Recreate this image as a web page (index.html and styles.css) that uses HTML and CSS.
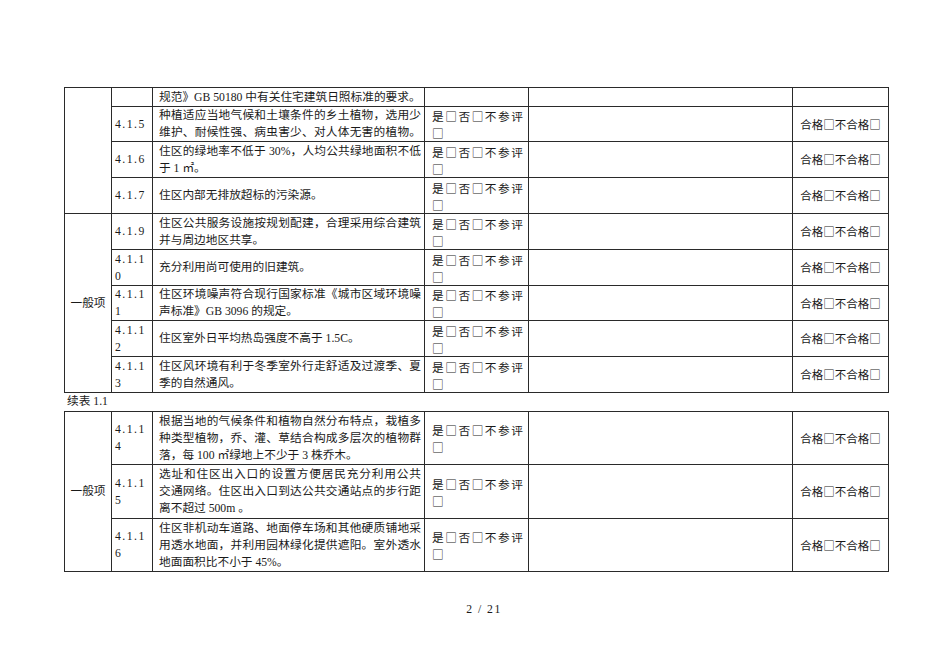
FILE: index.html
```html
<!DOCTYPE html>
<html lang="zh-CN">
<head>
<meta charset="utf-8">
<title>续表 1.1</title>
<link rel="stylesheet" href="styles.css">
</head>
<body>
<div class="page">
<table class="tbl">
<colgroup><col class="c1"><col class="c2"><col class="c3"><col class="c4"><col class="c5"><col class="c6"></colgroup>
<tr class="h19"><td class="cat" rowspan="4"></td><td class="num"></td><td class="txt"><span class="ln">规范》GB 50180 中有关住宅建筑日照标准的要求。</span></td><td class="opt"></td><td></td><td class="res"></td></tr>
<tr class="h35"><td class="num">4.1.5</td><td class="txt"><span class="ln j">种植适应当地气候和土壤条件的乡土植物，选用少</span><span class="ln j">维护、耐候性强、病虫害少、对人体无害的植物。</span></td><td class="opt"><span class="ln j">是□否□不参评</span><span class="ln">□</span></td><td></td><td class="res">合格□不合格□</td></tr>
<tr class="h36"><td class="num">4.1.6</td><td class="txt"><span class="ln j">住区的绿地率不低于 30%，人均公共绿地面积不低</span><span class="ln">于 1 ㎡。</span></td><td class="opt"><span class="ln j">是□否□不参评</span><span class="ln">□</span></td><td></td><td class="res">合格□不合格□</td></tr>
<tr class="h36"><td class="num">4.1.7</td><td class="txt"><span class="ln">住区内部无排放超标的污染源。</span></td><td class="opt"><span class="ln j">是□否□不参评</span><span class="ln">□</span></td><td></td><td class="res">合格□不合格□</td></tr>
<tr class="h36"><td class="cat" rowspan="5">一般项</td><td class="num">4.1.9</td><td class="txt"><span class="ln j">住区公共服务设施按规划配建，合理采用综合建筑</span><span class="ln">并与周边地区共享。</span></td><td class="opt"><span class="ln j">是□否□不参评</span><span class="ln">□</span></td><td></td><td class="res">合格□不合格□</td></tr>
<tr class="h36"><td class="num">4.1.1<br>0</td><td class="txt"><span class="ln">充分利用尚可使用的旧建筑。</span></td><td class="opt"><span class="ln j">是□否□不参评</span><span class="ln">□</span></td><td></td><td class="res">合格□不合格□</td></tr>
<tr class="h35"><td class="num">4.1.1<br>1</td><td class="txt"><span class="ln j">住区环境噪声符合现行国家标准《城市区域环境噪</span><span class="ln">声标准》GB 3096 的规定。</span></td><td class="opt"><span class="ln j">是□否□不参评</span><span class="ln">□</span></td><td></td><td class="res">合格□不合格□</td></tr>
<tr class="h36"><td class="num">4.1.1<br>2</td><td class="txt"><span class="ln">住区室外日平均热岛强度不高于 1.5C。</span></td><td class="opt"><span class="ln j">是□否□不参评</span><span class="ln">□</span></td><td></td><td class="res">合格□不合格□</td></tr>
<tr class="h36"><td class="num">4.1.1<br>3</td><td class="txt"><span class="ln j">住区风环境有利于冬季室外行走舒适及过渡季、夏</span><span class="ln">季的自然通风。</span></td><td class="opt"><span class="ln j">是□否□不参评</span><span class="ln">□</span></td><td></td><td class="res">合格□不合格□</td></tr>
</table>
<div class="caption">续表 1.1</div>
<table class="tbl">
<colgroup><col class="c1"><col class="c2"><col class="c3"><col class="c4"><col class="c5"><col class="c6"></colgroup>
<tr class="h53"><td class="cat" rowspan="3">一般项</td><td class="num">4.1.1<br>4</td><td class="txt"><span class="ln j">根据当地的气候条件和植物自然分布特点，栽植多</span><span class="ln j">种类型植物，乔、灌、草结合构成多层次的植物群</span><span class="ln">落，每 100 ㎡绿地上不少于 3 株乔木。</span></td><td class="opt"><span class="ln j">是□否□不参评</span><span class="ln">□</span></td><td></td><td class="res">合格□不合格□</td></tr>
<tr class="h54"><td class="num">4.1.1<br>5</td><td class="txt"><span class="ln j">选址和住区出入口的设置方便居民充分利用公共</span><span class="ln j">交通网络。住区出入口到达公共交通站点的步行距</span><span class="ln">离不超过 500m 。</span></td><td class="opt"><span class="ln j">是□否□不参评</span><span class="ln">□</span></td><td></td><td class="res">合格□不合格□</td></tr>
<tr class="h53"><td class="num">4.1.1<br>6</td><td class="txt"><span class="ln j">住区非机动车道路、地面停车场和其他硬质铺地采</span><span class="ln j">用透水地面，并利用园林绿化提供遮阳。室外透水</span><span class="ln">地面面积比不小于 45%。</span></td><td class="opt"><span class="ln j">是□否□不参评</span><span class="ln">□</span></td><td></td><td class="res">合格□不合格□</td></tr>
</table>
<div class="pageno">2 / 21</div>
</div>
</body>
</html>
```

FILE: styles.css
```css
html, body {
  margin: 0;
  padding: 0;
  background: #fff;
}
body {
  font-family: "Liberation Serif", "Noto Sans CJK SC", serif;
  font-size: 11.7px;
  color: #1a1a1a;
}
.page {
  width: 950px;
  height: 672px;
  padding: 87px 0 0 64px;
  box-sizing: border-box;
}
.tbl {
  width: 824px;
  border-collapse: collapse;
  table-layout: fixed;
}
.c1 { width: 47px; }
.c2 { width: 41px; }
.c3 { width: 272px; }
.c4 { width: 104px; }
.c5 { width: 264px; }
.c6 { width: 96px; }
.tbl td {
  border: 1px solid #2a2a2a;
  padding: 0;
  vertical-align: middle;
  line-height: 17px;
}
.h19 { height: 19px; }
.h35 { height: 35px; }
.h36 { height: 36px; }
.h53 { height: 53px; }
.h54 { height: 54px; }
.tbl td.cat {
  text-align: center;
}
.tbl td.num {
  padding-left: 3px;
  letter-spacing: 1.5px;
}
.tbl td.txt {
  padding: 0 3px 0 6px;
}
.tbl td.opt {
  padding: 0 5px 0 7px;
  font-family: "Noto Sans CJK SC", sans-serif;
}
.tbl td.res {
  text-align: center;
  font-family: "Noto Sans CJK SC", sans-serif;
  font-size: 11.5px;
}
.ln {
  display: block;
  white-space: nowrap;
}
.ln.j {
  white-space: normal;
  text-align: justify;
  text-align-last: justify;
  text-justify: inter-character;
}
.caption {
  height: 18px;
  line-height: 18px;
  padding-left: 3px;
}
.pageno {
  width: 824px;
  margin-top: 29px;
  padding-left: 8px;
  line-height: 18px;
  text-align: center;
  letter-spacing: 1.5px;
}
```
